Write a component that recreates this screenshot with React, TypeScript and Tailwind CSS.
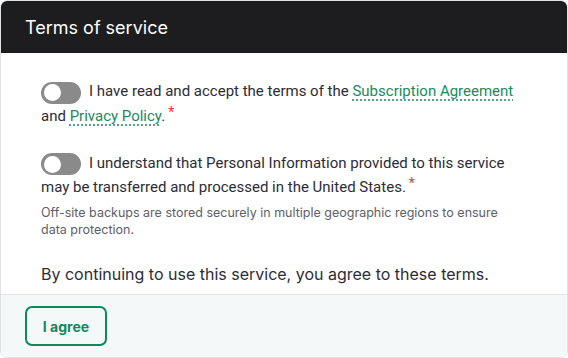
import type { ReactNode } from 'react';

const Toggle = () => (
  <span className="mr-2 inline-flex h-[22px] w-10 shrink-0 items-center rounded-full bg-[#8a8a8a] px-[3px] align-[-5px]">
    <span className="h-[17px] w-[17px] rounded-full bg-white" />
  </span>
);

const Req = () => <span className="relative -top-[4px] ml-[3px] text-[14px] leading-none text-[#e0393e]">*</span>;

const Link = ({ children }: { children: ReactNode }) => (
  <a className="text-[#1b8a5e] underline decoration-dotted decoration-[#1b8a5e] underline-offset-[4px]">{children}</a>
);

export default function App() {
  return (
    <div className="h-[358px] w-[568px] bg-white" style={{ fontFamily: 'Inter, "Noto Sans", sans-serif' }}>
      <div className="flex h-full flex-col overflow-hidden rounded-[7px] border border-[#dfe3e6]">
        <div className="flex h-[52px] shrink-0 items-center bg-[#1d1d1f] px-6 text-[18px] text-white">Terms of service</div>
        <div className="flex flex-1 flex-col px-10 pt-[26px] text-[#2c2c36]">
          <p className="text-[15px] leading-[24px]" style={{ fontFamily: 'Roboto, Inter, sans-serif' }}>
            <Toggle />I have read and accept the terms of the <Link>Subscription Agreement</Link> and <Link>Privacy Policy</Link>.<Req />
          </p>
          <p className="mt-[23px] text-[15px] leading-[24px]" style={{ fontFamily: 'Roboto, Inter, sans-serif' }}>
            <Toggle />I understand that Personal Information provided to this service may be transferred and processed in the United States.<Req />
          </p>
          <p className="mt-[5px] text-[12.5px] leading-[17px] text-[#5e5e68]">
            Off-site backups are stored securely in multiple geographic regions to ensure data protection.
          </p>
          <p className="mt-[24px] text-[16px] leading-[24px]">By continuing to use this service, you agree to these terms.</p>
        </div>
        <div className="flex h-[63px] shrink-0 items-center border-t border-[#e2e5e7] bg-[#f5f8f8] px-6">
          <button className="h-[40px] w-[82px] rounded-[7px] border-2 border-[#0d8a5c] text-[14px] font-bold text-[#0d8a5c]">I agree</button>
        </div>
      </div>
    </div>
  );
}
